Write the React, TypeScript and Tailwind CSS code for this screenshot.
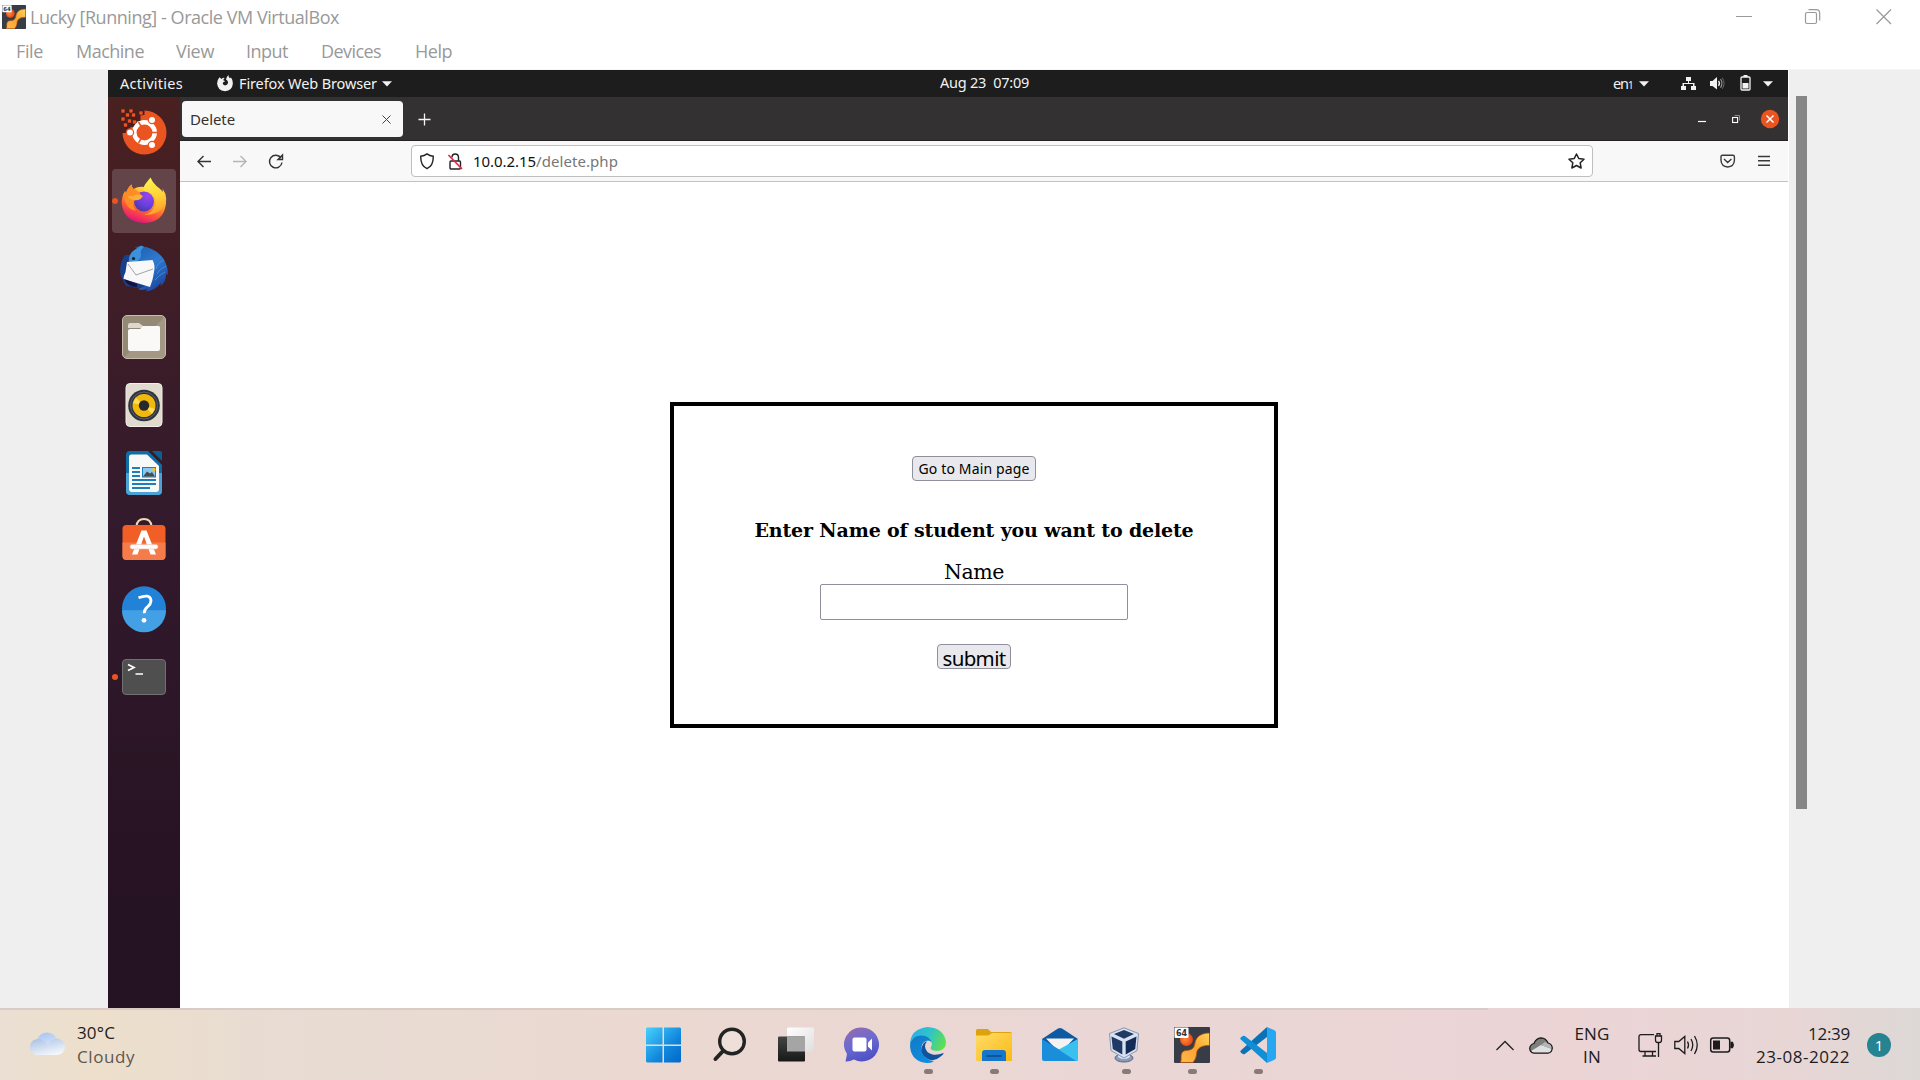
import React, { useLayoutEffect, useRef, useState } from "react";

/** Single line of text whose tracking is adjusted so that it fills `w` pixels. */
function Fit({ w, className = "", children }: { w: number; className?: string; children: string }) {
  const ref = useRef<HTMLSpanElement>(null);
  const [spacing, setSpacing] = useState(0);
  useLayoutEffect(() => {
    const el = ref.current;
    if (!el) return;
    const natural = el.getBoundingClientRect().width;
    setSpacing((w - natural) / Math.max(1, children.length));
  }, [w, children]);
  return (
    <span className={"flex shrink-0 " + className} style={{ width: w }}>
      <span ref={ref} className="inline-block whitespace-pre" style={{ letterSpacing: spacing }}>
        {children}
      </span>
    </span>
  );
}

function Caret({ className = "" }: { className?: string }) {
  return (
    <svg className={"shrink-0 " + className} width="10" height="6" viewBox="0 0 10 6">
      <path d="M0 .3h10L5 5.6z" fill="#f2f2f2" />
    </svg>
  );
}

function LuckyIcon({ size }: { size: number }) {
  return (
    <svg className="shrink-0" width={size} height={size} viewBox="0 0 36 36">
      <defs>
        <linearGradient id="lk" x1="1" y1="0" x2="0" y2="1">
          <stop offset="0" stopColor="#ffd45c" />
          <stop offset=".5" stopColor="#f9a32c" />
          <stop offset="1" stopColor="#ffb94e" />
        </linearGradient>
        <radialGradient id="lkb" cx=".4" cy=".5" r=".6">
          <stop offset="0" stopColor="#ff8a3a" />
          <stop offset="1" stopColor="#e8420e" />
        </radialGradient>
      </defs>
      <rect width="36" height="36" rx="1" fill="#383c47" />
      <circle cx="12.5" cy="12.5" r="6.5" fill="url(#lkb)" />
      <path d="M35.5 6v12.500c-6 0-9 1-11.500 4-2 2.500-1 5-2 7.500-.8 2.600-2 4-3 5.500H6.500C8 32 6 29 8 25.500c2-3 7-1.500 10-3.500 3.500-2.500 2-7 5-11 2.500-3.500 7-5 12.500-5z" fill="url(#lk)" stroke="#a84a12" strokeWidth=".8" />
      <rect x=".5" y=".5" width="14" height="10.500" rx="1" fill="#fff" />
      <text x="7.500" y="8.600" fontSize="8" fontWeight="700" textAnchor="middle" fill="#333" fontFamily="DejaVu Sans">64</text>
    </svg>
  );
}

function TitleBar() {
  return (
    <header className="h-[69px] bg-white text-[18px] text-[#999] font-['Open_Sans',sans-serif]">
      <div className="flex h-[34px] items-center">
        <div className="ml-0.5 mr-1"><LuckyIcon size={24} /></div>
        <Fit w={309} className="mt-px">Lucky [Running] - Oracle VM VirtualBox</Fit>
        <svg className="ml-auto mr-7 shrink-0" width="156" height="18" viewBox="0 0 156 18" fill="none" stroke="#999">
          <path d="M0 8.500h16" />
          <rect x="69.500" y="4.500" width="11" height="11" rx="1.500" strokeWidth="1.200" />
          <path d="M72.500 1.700h7.500q3.700 0 3.700 3.700v7" strokeWidth="1.200" />
          <path d="M140.500 1.500l14.500 14.500M155 1.500l-14.500 14.500" strokeWidth="1.200" />
        </svg>
      </div>
      <nav className="flex h-[35px] items-center pl-4">
        <Fit w={27} className="mr-[33px]">File</Fit>
        <Fit w={68} className="mr-8">Machine</Fit>
        <Fit w={38} className="mr-8">View</Fit>
        <Fit w={42} className="mr-[33px]">Input</Fit>
        <Fit w={60} className="mr-[34px]">Devices</Fit>
        <Fit w={37}>Help</Fit>
      </nav>
    </header>
  );
}

function TopBar() {
  return (
    <div className="flex h-[27px] shrink-0 items-center bg-[#1d1d1d] pl-3 text-[14.500px] text-[#f2f2f2]">
      <Fit w={63} className="mr-[34px]">Activities</Fit>
      <svg className="mr-1.5 shrink-0" width="16" height="17" viewBox="0 0 16 17">
        <path d="M2.500 2.200 4.500 4Q6 2.600 7.600 2.900 6.200 4 6.300 5.200q1.200.7 1.900 1-2.200.4-2.500 2 .2 2 2.500 2.200 2.700-.3 2.900-2.800Q11 5.300 9 4.500 9.400 2 11.400 0q-.1 1.800 1.500 3.200L14 2.600q2 2.600 1.900 5.900Q15.300 15.600 8 16.300.4 15.500.1 8.300.1 5 2.500 2.200z" fill="#f2f2f2" />
      </svg>
      <Fit w={138} className="mr-[5px]">Firefox Web Browser</Fit>
      <Caret />
      <Fit w={89} className="-mt-px ml-[548px]">{"Aug 23  07:09"}</Fit>
      <span className="ml-[584px] flex items-center">
        <Fit w={15}>en</Fit>
        <Fit w={6} className="mt-1 text-[10px]">1</Fit>
      </span>
      <Caret className="ml-[5px]" />
      <svg className="ml-8 shrink-0" width="15" height="15" viewBox="0 0 15 15" fill="#f2f2f2">
        <path d="M5 1h5v4H8v2h5.500v3H15v4h-5v-4h2V8H3v2h2v4H0v-4h1.500V7H7V5H5z" />
      </svg>
      <svg className="ml-3.5 shrink-0" width="15" height="15" viewBox="0 0 15 15">
        <path d="M0 5h2.500L7 1v12.500L2.500 10H0z" fill="#f2f2f2" />
        <path d="M8.500 4.800q2 2.500 0 5" fill="none" stroke="#f2f2f2" strokeWidth="1.300" />
        <path d="M10.500 3q3 4.300 0 8.600" fill="none" stroke="#999" strokeWidth="1.100" />
        <path d="M12.300 1.800q3.500 5.500 0 11" fill="none" stroke="#666" />
      </svg>
      <svg className="-mt-px ml-[15px] shrink-0" width="11" height="16" viewBox="0 0 11 16">
        <path d="M3.500 0h4v2h-4z" fill="#f2f2f2" />
        <rect x="1" y="2" width="9" height="13" rx="1" fill="none" stroke="#f2f2f2" strokeWidth="1.300" />
        <path d="M2.500 8h6v5.500h-6z" fill="#f2f2f2" />
      </svg>
      <Caret className="ml-[12px]" />
    </div>
  );
}

function UbuntuIcon() {
  return (
    <svg width="48" height="48" viewBox="1.5 1 48 48">
      <path d="M26 2.600A22 22 0 1 1 4 25h8v-6h5v-6h5V7h4z" fill="#e95420" />
      <g fill="#e95420" stroke="#3c1a1c" strokeWidth=".6">
        <path d="M2.500 1h4v4h-4zM10.500 1h4v4h-4zM7 5h4v4H7zM13 5h4v4h-4zM2.500 9h4v4h-4zM9 11h4v4H9zM14 12h4v4h-4zM20.500 3h4v4h-4zM5 15h4v4H5z" />
      </g>
      <circle cx="26" cy="24.500" r="10.200" fill="none" stroke="#fff" strokeWidth="4.500" />
      <g stroke="#e95420" strokeWidth="1.500">
        <path d="M20 14l3 5M20 35l3-5M33 24.500h6" />
      </g>
      <g fill="#fff" stroke="#e95420" strokeWidth="1.200">
        <circle cx="11.500" cy="24.500" r="3.600" />
        <circle cx="33.500" cy="12" r="3.600" />
        <circle cx="33.500" cy="37" r="3.600" />
      </g>
    </svg>
  );
}

function FirefoxIcon() {
  return (
    <svg width="48" height="48" viewBox="0.500 0.500 48 48">
      <defs>
        <linearGradient id="fx" x1=".75" y1=".1" x2=".35" y2="1">
          <stop offset="0" stopColor="#ffe93e" />
          <stop offset=".35" stopColor="#ffa62a" />
          <stop offset=".65" stopColor="#ff5a36" />
          <stop offset="1" stopColor="#e3107c" />
        </linearGradient>
        <radialGradient id="fxp" cx=".7" cy=".2" r=".9">
          <stop offset="0" stopColor="#9a45ee" />
          <stop offset=".6" stopColor="#6540dc" />
          <stop offset="1" stopColor="#45389e" />
        </radialGradient>
        <linearGradient id="fxy" x1=".4" y1="0" x2=".6" y2="1">
          <stop offset="0" stopColor="#fff250" />
          <stop offset=".5" stopColor="#ffd33a" />
          <stop offset="1" stopColor="#ff9a27" />
        </linearGradient>
      </defs>
      <path d="M12 8q.3 3 2 4.500Q20 9 27 11l14 4q5.500 5.500 5.500 12Q44.500 45.500 25 46.500 4.500 45.500 2.200 27 2 20 5.500 14.500L6.500 17Q8 11 12 8z" fill="url(#fx)" />
      <circle cx="24.500" cy="25" r="10" fill="url(#fxp)" />
      <path d="M31 1q-2 2.500-5.500 7-2.500 4-1 6.500 7 .5 10 4.500 3 5 .5 11-3 7-10.500 8 12 1 18-6Q47 28 46.700 22q-.2-5-3.700-10l.5 3.500Q40.500 12 37 9.500q-4-3.500-6-8.500z" fill="url(#fxy)" />
      <path d="M12 8q.3 3 2 4.500 4 .5 8 6.500-2 4-7 5-3 5 1.500 10-8-1-10.500-8-2-5.500-.5-11.500L6.500 17Q8 11 12 8z" fill="#ff8c24" />
      <path d="M7 19.500q6 .5 8-.5 5-2.500 8.500.6-1.500 3-5 4-6 1-11.500-4.100z" fill="#ffae3c" />
    </svg>
  );
}

function ThunderbirdIcon() {
  return (
    <svg width="48" height="48" viewBox="0 0 48 48">
      <defs>
        <linearGradient id="tb" x1=".2" y1="0" x2=".8" y2="1">
          <stop offset="0" stopColor="#1e5eae" />
          <stop offset=".45" stopColor="#2f7bd0" />
          <stop offset="1" stopColor="#1b3f9c" />
        </linearGradient>
      </defs>
      <path d="M5 10Q-2 20 1 32l5 9 12 2 17-3V10z" fill="#173f8a" />
      <path d="M14 2Q32-1 43 13q6 10 4.500 17l-1.500-1.500q.5 8-5.500 12.500l.5-3.500q-5 8-15.500 9l2.500-3Q22 46 18 44l14-6 2-21-19-1.500-6 4.500Q7 12 18 3z" fill="url(#tb)" />
      <path d="M9 18q-1-8 4-12L20 1q2-1 4 1-4 3-3 8 0 4-5 7z" fill="#3b91dc" />
      <path d="M7 17 32.500 15q3 5 1.500 12-1 8-4 15L3.500 34q0-3 2-7z" fill="#f8f8f8" />
      <path d="m8 19 8 11 17-6" fill="none" stroke="#9a9a9a" strokeWidth=".9" />
      <path d="M44 15q-7 3-8 9M46 21q-7 3-9 8M45 27q-6 3-10 8" stroke="#4a98dc" strokeWidth=".8" fill="none" />
      <circle cx="13.500" cy="13.500" r="1.600" fill="#222" />
      <path d="m4 34 13 5v3Q8 42 4 34z" fill="#1a1040" />
    </svg>
  );
}

function FilesIcon() {
  return (
    <svg width="48" height="48" viewBox="0 0 48 48">
      <defs>
        <linearGradient id="fl" x1="0" y1="0" x2="1" y2="1">
          <stop offset=".5" stopColor="#948974" />
          <stop offset=".5" stopColor="#a29883" />
        </linearGradient>
      </defs>
      <rect x="2.500" y="2.500" width="43" height="43" rx="4.500" fill="url(#fl)" stroke="#c4bdac" />
      <path d="M8 15v-3q0-2 2-2h9l4 3h15q2 0 2 2z" fill="#dcd8cb" />
      <path d="M8 18q0-2 2-2h10l3-3h15q2 0 2 2v21q0 2-2 2H10q-2 0-2-2z" fill="#faf9f7" />
    </svg>
  );
}

function SpeakerIcon() {
  return (
    <svg width="48" height="48" viewBox="0 0 48 48">
      <rect x="6" y="2.500" width="36" height="43" rx="4" fill="#e0dbce" stroke="#f3f0e9" />
      <circle cx="24" cy="24.500" r="15.800" fill="#30333b" />
      <circle cx="24" cy="24.500" r="13.500" fill="none" stroke="#596170" />
      <circle cx="24" cy="24.500" r="11.500" fill="#f2b90d" />
      <path d="M16 17 24 24.500 13 22zM32 33l-8-8.500L35 28z" fill="#ffdd55" />
      <circle cx="24" cy="24.500" r="5.200" fill="#29292c" />
    </svg>
  );
}

function WriterIcon() {
  return (
    <svg width="48" height="48" viewBox="0 0 48 48">
      <path d="M10 2h18l14 14v26q0 4-4 4H10q-4 0-4-4V6q0-4 4-4z" fill="#0f6fa5" />
      <path d="M6 24h36v18q0 4-4 4H10q-4 0-4-4z" fill="#4aa3d4" />
      <path d="M32 2h8q2 0 2 2v8z" fill="#0d5f8d" />
      <path d="M11 5.500h16L39 17v23q0 3-3 3H12q-3 0-3-3V8q0-2.500 2-2.500z" fill="#f8f8f8" />
      <path d="M12 19h8M12 23h8M12 27h8M12 31h24M12 35h24M12 39h18" stroke="#1d7fb8" strokeWidth="2" />
      <rect x="22.500" y="18.500" width="13" height="9.500" fill="#8cc8ee" stroke="#1d7fb8" />
      <path d="m23 27.500 4-5 3 2 2-1.500 3 4.500z" fill="#4b4b4b" />
      <circle cx="34" cy="20.500" r="1.700" fill="#f5c211" />
    </svg>
  );
}

function SoftwareIcon() {
  return (
    <svg width="48" height="50" viewBox="0 1.500 48 50">
      <path d="M16.500 12Q17 4.500 24 4.500t7.500 7.500" fill="none" stroke="#f2d9b0" strokeWidth="2.200" />
      <rect x="2.500" y="10.500" width="43" height="35" rx="4" fill="#f25f26" />
      <path d="M2.500 28h43v13.500q0 4-4 4h-35q-4 0-4-4z" fill="#f47b4a" />
      <path d="M21.500 16h5L36 40h-5.500L24 22l-6.500 18H12z" fill="#fff" />
      <rect x="10" y="30" width="28" height="4.500" rx="2.200" fill="#fff" stroke="#f0b9a2" strokeWidth=".6" />
    </svg>
  );
}

function HelpIcon() {
  return (
    <svg width="48" height="48" viewBox="0 .7 48 48">
      <circle cx="24" cy="24" r="22" fill="#2182d8" />
      <path d="M2 26h44A22 22 0 0 1 2 26z" fill="#43a0e4" />
      <path d="M18.500 13.500q11.500-4.500 12.500 2.500 0 4-3.500 6.500-3.300 2.500-3.300 6.500" fill="none" stroke="#fff" strokeWidth="2.800" />
      <circle cx="24" cy="36" r="2.400" fill="#fff" />
    </svg>
  );
}

function TerminalIcon() {
  return (
    <svg width="48" height="48" viewBox="0 0 48 48">
      <rect x="2.500" y="6.500" width="43" height="35" rx="3.500" fill="#4f4f4f" stroke="#717171" />
      <path d="m8 11.500 6 3-6 3M15.500 21H23" fill="none" stroke="#fff" strokeWidth="1.700" />
    </svg>
  );
}

function Dock() {
  const items = [
    { icon: <UbuntuIcon /> },
    { icon: <FirefoxIcon />, running: true, active: true },
    { icon: <ThunderbirdIcon /> },
    { icon: <FilesIcon /> },
    { icon: <SpeakerIcon /> },
    { icon: <WriterIcon /> },
    { icon: <SoftwareIcon /> },
    { icon: <HelpIcon /> },
    { icon: <TerminalIcon />, running: true },
  ];
  return (
    <aside className="flex w-[72px] shrink-0 flex-col items-center gap-1 bg-linear-to-b from-[#4a2020] via-[#331a2c] via-45% to-[#251222] to-90% pt-1">
      {items.map((it, i) => (
        <div
          key={i}
          className={"relative flex size-16 shrink-0 items-center justify-center rounded " + (it.active ? "bg-[#634448]" : "")}
        >
          {it.running && <i className="absolute left-0 top-[29px] size-1.5 rounded-full bg-[#e95420]" />}
          {it.icon}
        </div>
      ))}
    </aside>
  );
}

function Browser() {
  return (
    <main className="flex min-w-0 flex-1 flex-col bg-white">
      <div className="flex h-[44px] shrink-0 border-b border-[#242223] bg-[#333132] pl-0.5 pt-1">
        <div className="flex h-9 w-[221px] items-center justify-between rounded bg-[#f8f8f8] pl-2 pr-3 text-[15px] text-[#333]">
          <Fit w={45}>Delete</Fit>
          <svg width="9" height="9" viewBox="0 0 9 9" stroke="#444" strokeWidth="1"><path d="m.5.5 8 8m0-8-8 8" /></svg>
        </div>
        <svg className="ml-[15px] mt-3" width="13" height="13" viewBox="0 0 13 13" stroke="#f5f5f5" strokeWidth="1.300"><path d="M.5 6.500h12M6.500.5v12" /></svg>
        <svg className="ml-auto mr-2" width="84" height="36" viewBox="0 0 84 36">
          <path d="M2 20.500h8" stroke="#fff" strokeWidth="1.200" />
          <rect x="36.600" y="16.500" width="5" height="5" fill="none" stroke="#fff" strokeWidth="1.100" />
          <path d="M38.500 14.500h5v5" fill="none" stroke="#999" strokeWidth=".9" />
          <circle cx="74" cy="18" r="9.200" fill="#e95420" />
          <path d="m70.500 14.500 7 7m0-7-7 7" stroke="#fff" strokeWidth="1.500" />
        </svg>
      </div>
      <div className="flex h-[41px] shrink-0 items-center border-b border-[#c2c2c2] bg-[#f8f8f8]">
        <svg className="ml-4 mt-0.5" width="88" height="18" viewBox="0 0 88 18" fill="none" stroke="#333" strokeWidth="1.400">
          <path d="M15 8.500H2M7.500 3 2 8.500 7.500 14" />
          <path d="M37 8.500h13M44.500 3l5.500 5.500-5.500 5.500" stroke="#b5b5b5" />
          <path d="M85 5A6.300 6.300 0 1 0 86 9.500M86.500 2v4.500H82z" />
        </svg>
        <div className="ml-[127px] flex h-8 w-[1182px] items-center rounded border border-[#bfbfbf] bg-white pl-2 pr-[7px] text-[15px]">
          <svg width="14" height="17" viewBox="0 0 14 17" fill="none" stroke="#222" strokeWidth="1.400">
            <path d="M7 .9q2.700 2 6.200 2.300.5 9.300-6.200 12.500Q.3 12.500.8 3.200 4.300 2.900 7 .9z" />
          </svg>
          <svg className="ml-3.5" width="15" height="17" viewBox="0 0 15 17" fill="none" stroke="#222" strokeWidth="1.400">
            <rect x="2" y="8" width="10.500" height="8" rx="1" />
            <path d="M4 4.500Q4 1 7.200 1t3.300 3.500V8" />
            <path d="m.5 2 13.500 14" stroke="#e22850" strokeWidth="1.600" />
          </svg>
          <Fit w={63} className="ml-2.5 text-[#111]">10.0.2.15</Fit>
          <Fit w={82} className="text-[#777]">/delete.php</Fit>
          <svg className="ml-auto" width="17" height="16" viewBox="0 0 17 16" fill="none" stroke="#222" strokeWidth="1.500" strokeLinejoin="round">
            <path d="M8.500 1 10.700 5.400l5.300.8-3.800 3.600.9 5.200-4.600-2.500L3.900 15l.9-5.200L1 6.200l5.300-.8z" />
          </svg>
        </div>
        <svg className="ml-auto mr-[17px]" width="51" height="16" viewBox="0 0 51 16" fill="none" stroke="#3a3a3a" strokeWidth="1.400">
          <path d="M2.500 2.200h10.400q1.500 0 1.500 1.500V7.500Q14 13.500 7.700 14 1.400 13.500 1 7.500V3.700q0-1.500 1.500-1.500zM4 6l3.700 3.500L11.400 6" />
          <path d="M38 3.500h12M38 7.800h12M38 12.200h12" />
        </svg>
      </div>
      <section className="min-h-0 flex-1 pl-[490px] pt-[220px] text-black">
        <div className="flex h-[326px] w-[608px] flex-col items-center border-4 border-black pt-[50px]">
          <button className="flex h-[25px] w-[124px] items-center justify-center rounded border border-[#8f8f9d] bg-[#e9e9ed] text-[14px]">
            <Fit w={111}>Go to Main page</Fit>
          </button>
          <h3 className="mt-9 flex h-[27px] items-center font-['DejaVu_Serif',serif] text-[19px] font-bold">
            <Fit w={439}>Enter Name of student you want to delete</Fit>
          </h3>
          <label className="mt-4 flex h-6 items-center font-['DejaVu_Serif',serif] text-[20.500px]">
            <Fit w={60}>Name</Fit>
          </label>
          <input className="h-9 w-[308px] shrink-0 rounded-[2px] border border-[#8f8f9d] bg-white" />
          <button className="mt-6 flex h-[25px] w-[74px] items-center justify-center rounded border border-[#8f8f9d] bg-[#e9e9ed] text-[20.500px] leading-none">
            <Fit w={63} className="pt-1">submit</Fit>
          </button>
        </div>
      </section>
    </main>
  );
}

function StartIcon() {
  return (
    <svg width="36" height="36" viewBox=".5 0 36 36">
      <defs><linearGradient id="st" x1="0" y1="0" x2="36" y2="36" gradientUnits="userSpaceOnUse"><stop offset="0" stopColor="#49d3ff" /><stop offset=".6" stopColor="#1186dc" /><stop offset="1" stopColor="#0067c8" /></linearGradient></defs>
      <path d="M1.500.5H17v17H.500v-16zM18.500.5h16l1 1v16h-17zM.500 19H17v16.500H1.500l-1-1zM18.500 19h17v15.500l-1 1h-16z" fill="url(#st)" />
    </svg>
  );
}

function SearchIcon() {
  return (
    <svg width="36" height="36" viewBox="0 0 36 36" fill="none" stroke="#232323" strokeLinecap="round">
      <circle cx="20" cy="14.500" r="12.300" fill="#ffffff30" strokeWidth="3.400" />
      <path d="m11 24-7.500 8" strokeWidth="4" />
    </svg>
  );
}

function TaskViewIcon() {
  return (
    <svg width="36" height="36" viewBox="0 0 36 36">
      <defs>
        <linearGradient id="tv" x1="0" y1="0" x2="0" y2="1"><stop offset="0" stopColor="#444" /><stop offset="1" stopColor="#181818" /></linearGradient>
        <linearGradient id="tw" x1="0" y1="0" x2="1" y2="1"><stop offset="0" stopColor="#fff" /><stop offset="1" stopColor="#dedede" /></linearGradient>
      </defs>
      <rect x="9" y=".5" width="27" height="24" rx="1" fill="url(#tw)" />
      <rect x="0" y="9.500" width="27" height="25" rx="1" fill="url(#tv)" />
      <path d="M9 9.500h18v15H9z" fill="#a5a5a5" />
    </svg>
  );
}

function ChatIcon() {
  return (
    <svg width="36" height="36" viewBox="0 0 36 36">
      <defs><linearGradient id="ch" x1=".1" y1="0" x2=".5" y2="1"><stop offset="0" stopColor="#9769ad" /><stop offset=".5" stopColor="#6b6cd0" /><stop offset="1" stopColor="#4f50c6" /></linearGradient></defs>
      <path d="M18 .5a17 17 0 1 1-8 32q-5 2.500-8.500 2L3 27A17 17 0 0 1 18 .5z" fill="url(#ch)" />
      <rect x="8.500" y="10.500" width="14" height="14" rx="2" fill="#fff" />
      <path d="m24 15.500 4-4v12l-4-4z" fill="#fff" />
    </svg>
  );
}

function EdgeIcon() {
  return (
    <svg width="36" height="36" viewBox="0 0 36 36">
      <defs>
        <linearGradient id="eg" x1="0" y1=".3" x2="1" y2=".6"><stop offset="0" stopColor="#2aaee8" /><stop offset=".5" stopColor="#2fc4c8" /><stop offset="1" stopColor="#62e04a" /></linearGradient>
        <linearGradient id="ef" x1="0" y1="0" x2=".5" y2="1"><stop offset="0" stopColor="#1279c5" /><stop offset="1" stopColor="#0f8ce0" /></linearGradient>
      </defs>
      <path d="M0 18Q0 2 17.500 0 34 1 36 15q0 8-8 9-7 0-7.500-3Q23 17 21 14.500L9 9z" fill="url(#eg)" />
      <path d="M0 19Q1 9 11 8.500q9 0 11 8-1-3-4-3-7 1-6.500 8.500Q13 32 24 34.500 21 36 17 36 1 34.500 0 19z" fill="url(#ef)" />
      <path d="M13.500 16.500Q9 23 14 29q8 8 16 1 4-3 3.500-4-6 2.500-11 1.500-7-2-7.500-8 0-3 2-5-2 0-3.500 2z" fill="#10539c" />
    </svg>
  );
}

function ExplorerIcon() {
  return (
    <svg width="36" height="36" viewBox="0 0 36 36">
      <defs><linearGradient id="ex" x1="0" y1="0" x2="1" y2="1"><stop offset="0" stopColor="#ffdc68" /><stop offset="1" stopColor="#fbb914" /></linearGradient></defs>
      <path d="M0 12V3.500q0-1.500 1.500-1.500H12l3 3h19q2 0 2 2v5z" fill="#dfa20f" />
      <path d="M0 8.500h12.500L16 6h19.500l.5.500v27q0 .5-.5.500H1q-1 0-1-1z" fill="url(#ex)" />
      <path d="M6 34v-8q0-3 3-3h18q3 0 3 3v8z" fill="#1477cb" />
      <path d="M11 29h14" stroke="#0a4a8c" strokeWidth="1.600" strokeLinecap="round" />
    </svg>
  );
}

function MailIcon() {
  return (
    <svg width="36" height="36" viewBox="0 0 36 36">
      <path d="M0 12 16 1.500q2-1.200 4 0L36 12v8H0z" fill="#0c59a4" />
      <path d="M4 11.500h28L20 24h-4z" fill="#f3f3f3" />
      <path d="M36 12v20q0 2-2 2L14 24z" fill="#3bc5f3" />
      <path d="M0 12l36 22H2q-2 0-2-2z" fill="#1b8edb" />
      <path d="M36 12 18 23.500l16 10.500q2 0 2-2z" fill="#39c0ef" />
    </svg>
  );
}

function VBoxIcon() {
  return (
    <svg width="36" height="36" viewBox="2 0 36 36">
      <ellipse cx="18" cy="31" rx="9" ry="4" fill="#8c9bb6" stroke="#53658a" />
      <ellipse cx="18" cy="29" rx="6" ry="3" fill="#dce4f2" />
      <path d="M18 .8 32.500 6.500 31 23.500 18 31 5 23.500 3.500 6.500z" fill="#d7e1f2" stroke="#7383a5" strokeWidth=".8" />
      <path d="M18 3 28 7l-10 4.800L8 7z" fill="#203a63" />
      <path d="M5.500 9.500 16.300 14.500v13L6.800 22z" fill="#203a63" />
      <path d="M30.500 9.500 19.700 14.500v13L29.200 22z" fill="#132c55" />
    </svg>
  );
}

function VSCodeIcon() {
  return (
    <svg width="36" height="36" viewBox="0 0 36 36">
      <path d="M27 0 .8 23.500q-1 1.200.2 2.200L2.800 27q1 .7 2 0L27 10z" fill="#0b72b5" />
      <path d="M27 36 .8 12.500q-1-1.200.2-2.200L2.800 9q1-.7 2 0L27 26z" fill="#118fd6" />
      <path d="M27 0l7.500 3.300Q36 4 36 5.500v25q0 1.500-1.500 2.200L27 36z" fill="#27a6f2" />
    </svg>
  );
}

function Taskbar() {
  const apps = [
    { icon: <StartIcon /> },
    { icon: <SearchIcon /> },
    { icon: <TaskViewIcon /> },
    { icon: <ChatIcon /> },
    { icon: <EdgeIcon />, open: true },
    { icon: <ExplorerIcon />, open: true },
    { icon: <MailIcon /> },
    { icon: <VBoxIcon />, open: true },
    { icon: <LuckyIcon size={36} />, open: true },
    { icon: <VSCodeIcon />, open: true },
  ];
  return (
    <footer className="h-[72px] bg-[linear-gradient(90deg,#eadfd3_0%,#eddfcb_5%,#e8dcd3_14%,#ebd8d1_36%,#ead6d5_60%,#ecd4d5_82%,#e8d6d5_93%,#ddd8d6_100%)] font-['Open_Sans',sans-serif] text-[17px] text-[#1c1c1c]">
      <div className="h-0.5 w-[1488px] bg-[#d9cbc5]" />
      <div className="flex h-[70px] items-center">
        <div className="flex w-[631px] items-center pl-[30px]">
          <svg className="mr-[11px] mt-[-3px] shrink-0" width="36" height="24" viewBox="0 0 36 24">
            <defs>
              <linearGradient id="cl" x1=".3" y1="0" x2=".6" y2="1"><stop offset="0" stopColor="#a8c5f3" /><stop offset="1" stopColor="#eaf1fb" /></linearGradient>
              <linearGradient id="cm" x1=".1" y1="0" x2=".6" y2="1"><stop offset="0" stopColor="#a9c1e4" /><stop offset="1" stopColor="#f3f6fb" /></linearGradient>
            </defs>
            <circle cx="17" cy="11" r="10.500" fill="url(#cl)" />
            <path d="M8.500 23a8 8 0 1 1 4-14.500Q16 10 18 14q2-7 9-7.500A8.300 8.300 0 0 1 28 23z" fill="url(#cm)" />
          </svg>
          <div className="flex flex-col leading-6">
            <Fit w={38}>30°C</Fit>
            <Fit w={58} className="text-[#5c5752]">Cloudy</Fit>
          </div>
        </div>
        <div className="flex h-full">
          {apps.map((a, i) => (
            <div key={i} className="relative flex w-[66px] items-center justify-center">
              {a.icon}
              {a.open && <i className="absolute bottom-[6px] left-[29px] h-[5px] w-[9px] rounded-full bg-[#857b79]" />}
            </div>
          ))}
        </div>
        <svg className="ml-[205px] shrink-0" width="18" height="11" viewBox="0 0 18 11" fill="none" stroke="#222" strokeWidth="1.300"><path d="M.5 10 9 1.500l8.500 8.500" /></svg>
        <svg className="ml-[15px] shrink-0" width="24" height="17" viewBox="0 0 24 17">
          <path d="M5 16.200Q1 15.500.700 11.500 1 7.500 5 6.500 7 1 12 .8q5 .2 7 5.200 4 1 4.300 5-.3 4.500-4.300 5.200z" fill="#7e7e7e" />
          <path d="m2 14 10-6 11 4q-1 4-4 4.200H5z" fill="#e0e0e0" />
          <path d="m12 8 4-3 3 1q4 1 4.300 6z" fill="#b5b5b5" />
          <path d="M5 16.200Q1 15.500.700 11.500 1 7.500 5 6.500 7 1 12 .8q5 .2 7 5.200 4 1 4.300 5-.3 4.500-4.300 5.200z" fill="none" stroke="#161616" strokeWidth="1.200" />
        </svg>
        <div className="ml-[22px] flex w-[34px] flex-col items-center leading-[23px]">
          <Fit w={35}>ENG</Fit>
          <Fit w={18}>IN</Fit>
        </div>
        <svg className="ml-[29px] shrink-0" width="96" height="24" viewBox="0 0 96 24" fill="none" stroke="#1c1c1c" strokeWidth="1.300">
          <path d="M16 1.700H3Q1 1.700 1 3.500v13q0 2 2 2h15M7 18.500V23m7.500-4.500V23M4.500 23H18M20.500 9.500V24M17.500 3h6v4q0 2.500-2 2.500h-2q-2 0-2-2.500zM19 3V.7h3V3" />
          <path d="M36.800 8.500h4l6-5v17l-6-5h-4zM49.500 8.500q2 3.500 0 7M53 6q3.500 6 0 12M56.500 3q5.500 9 0 18" />
          <rect x="72.700" y="5" width="19" height="14" rx="2.500" strokeWidth="1.500" />
          <path d="M75 7.500h7v9h-7z" fill="#1c1c1c" stroke="none" />
          <path d="M93 9.500h1.500q1.500 2.500 0 5H93z" fill="#1c1c1c" />
        </svg>
        <div className="ml-[22px] flex flex-col items-end leading-[23px]">
          <Fit w={42}>12:39</Fit>
          <Fit w={94}>23-08-2022</Fit>
        </div>
        <div className="ml-[17px] flex size-6 items-center justify-center rounded-full bg-[#268391] text-[15px] text-white">1</div>
      </div>
    </footer>
  );
}

export default function App() {
  return (
    <div className="flex h-[1080px] w-[1920px] flex-col overflow-hidden bg-[#efefef]">
      <TitleBar />
      <div className="flex h-[939px] border-t border-[#f6f6f6] pl-[108px]">
        <div className="flex w-[1681px] flex-col border-r border-white font-['Noto_Sans',sans-serif]">
          <TopBar />
          <div className="flex min-h-0 flex-1">
            <Dock />
            <Browser />
          </div>
        </div>
        <div className="ml-[7px] mt-[26px] h-[713px] w-[11px] bg-[#868686]" />
      </div>
      <Taskbar />
    </div>
  );
}
